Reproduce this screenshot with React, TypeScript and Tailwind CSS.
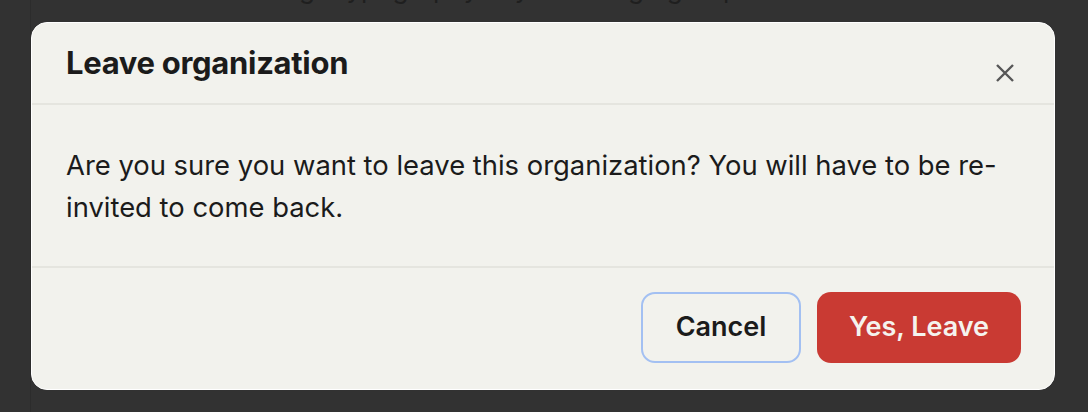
import React from "react";

export default function App() {
  return (
    <div className="w-[1088px] h-[412px] bg-[#323232] flex overflow-hidden font-['Inter','Noto_Sans',sans-serif]">
      <div className="w-[31px] h-full border-r border-[#2c2c2c] shrink-0" />
      <div className="flex-1 flex flex-col">
        <div className="h-0 relative">
          <div className="absolute left-[200px] -top-[24px] text-[26px] text-[#1f1f1f] whitespace-nowrap leading-[26px]">
            Manage typography in your design groups
          </div>
        </div>
        <div className="mt-[22px] w-[1024px] h-[368px] bg-[#f2f2ed] border border-white rounded-[16px] flex flex-col">
          <div className="h-[82px] shrink-0 flex items-start justify-between pl-[34px] pr-[38px] border-b-2 border-[#e5e5df]">
            <h2 className="pt-[21px] text-[31px] leading-[38px] font-bold text-[#1b1b1b] tracking-[-0.3px]">
              Leave organization
            </h2>
            <button className="mt-[39px] text-[#575757]" aria-label="Close">
              <svg width="22" height="22" viewBox="0 0 22 22" fill="none">
                <path d="M3 3 L19 19 M19 3 L3 19" stroke="currentColor" strokeWidth="2.4" strokeLinecap="butt" />
              </svg>
            </button>
          </div>
          <div className="h-[163px] shrink-0 px-[34px] pt-[39px] border-b-2 border-[#e5e5df]">
            <p className="text-[27.4px] leading-[42px] text-[#1b1b1b] w-[950px]">
              Are you sure you want to leave this organization? You will have to be re-invited to come back.
            </p>
          </div>
          <div className="flex-1 flex items-start justify-end gap-[16px] pt-[24px] pr-[33px]">
            <button className="w-[160px] h-[71px] rounded-[14px] border-2 border-[#a3c0f2] bg-[#f2f2ed] text-[27px] font-semibold text-[#1b1b1b]">
              Cancel
            </button>
            <button className="w-[204px] h-[71px] rounded-[14px] bg-[#c93a33] text-[27px] font-semibold text-[#f5f3ee]">
              Yes, Leave
            </button>
          </div>
        </div>
      </div>
    </div>
  );
}
